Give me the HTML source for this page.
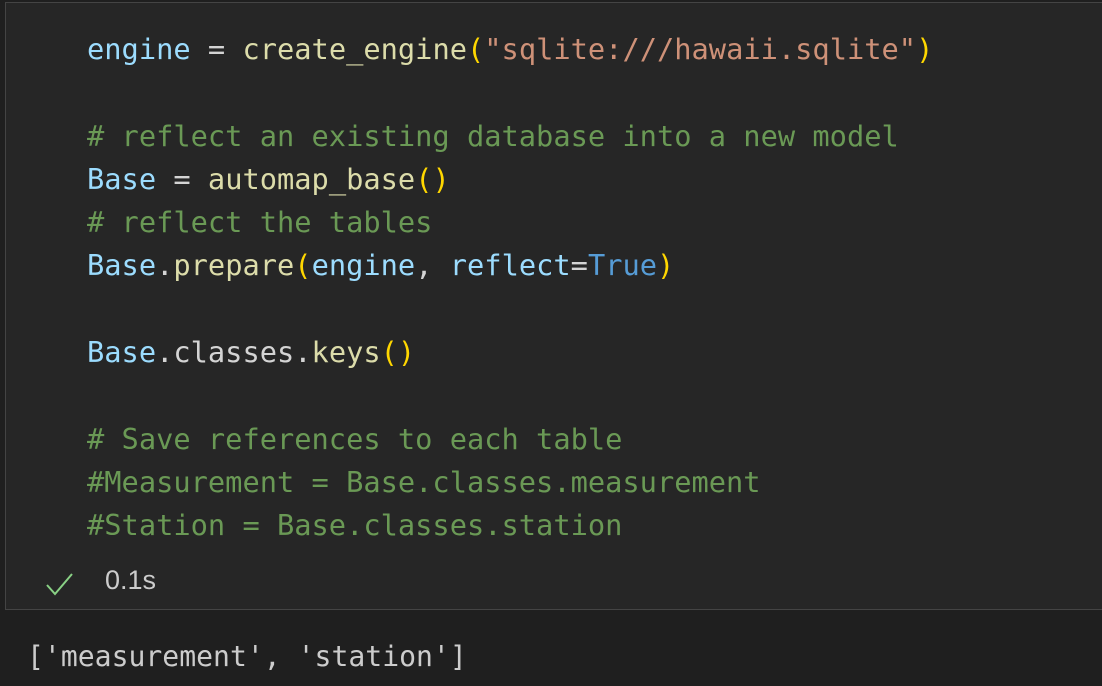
<!DOCTYPE html>
<html><head><style>
html,body{margin:0;padding:0;width:1102px;height:686px;background:#1f1f1f;overflow:hidden}
.cell{position:absolute;left:5px;top:2px;width:1110px;height:606px;background:#262626;border:1px solid #444;}
pre{position:absolute;left:87px;top:28px;margin:0;font-family:"DejaVu Sans Mono","Liberation Mono",monospace;font-size:28.7px;line-height:43.3px;color:#d4d4d4;white-space:pre}
.v{color:#9cdcfe}.f{color:#dcdcaa}.s{color:#ce9178}.c{color:#6a9955}.p{color:#ffd700}.k{color:#569cd6}
.st{position:absolute;left:105px;top:565px;font-family:"Liberation Sans",sans-serif;font-size:27px;color:#cccccc}
.out{position:absolute;left:27px;top:635px;margin:0;font-family:"DejaVu Sans Mono","Liberation Mono",monospace;font-size:28.1px;color:#cccccc;white-space:pre}
</style></head><body>
<div class="cell"></div>
<pre><span class="v">engine</span> = <span class="f">create_engine</span><span class="p">(</span><span class="s">"sqlite:///hawaii.sqlite"</span><span class="p">)</span>

<span class="c"># reflect an existing database into a new model</span>
<span class="v">Base</span> = <span class="f">automap_base</span><span class="p">()</span>
<span class="c"># reflect the tables</span>
<span class="v">Base</span>.<span class="f">prepare</span><span class="p">(</span><span class="v">engine</span>, <span class="v">reflect</span>=<span class="k">True</span><span class="p">)</span>

<span class="v">Base</span>.classes.<span class="f">keys</span><span class="p">()</span>

<span class="c"># Save references to each table</span>
<span class="c">#Measurement = Base.classes.measurement</span>
<span class="c">#Station = Base.classes.station</span></pre>
<svg style="position:absolute;left:45px;top:571px" width="30" height="26" viewBox="0 0 30 26"><path d="M2 14 L10 23 L27 3" fill="none" stroke="#89d185" stroke-width="2"/></svg>
<div class="st">0.1s</div>
<pre class="out">['measurement', 'station']</pre>
</body></html>
